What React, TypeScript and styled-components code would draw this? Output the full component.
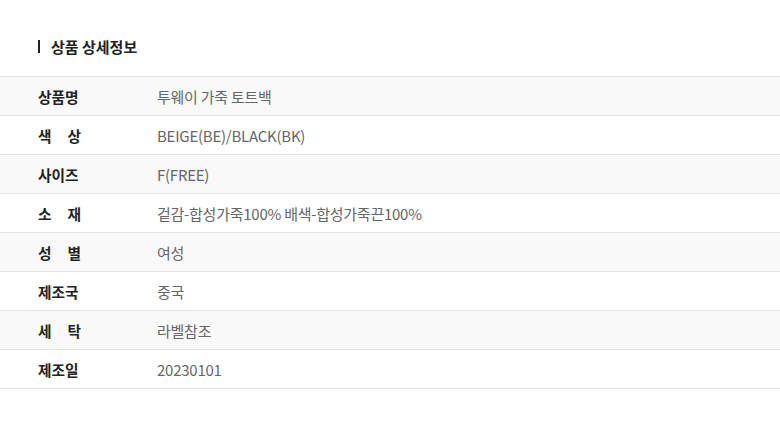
import styled, { createGlobalStyle } from 'styled-components';

const GlobalStyle = createGlobalStyle`
  * { box-sizing: border-box; }
  body {
    margin: 0;
    background: #fff;
    font-family: "Noto Sans CJK KR", "Noto Sans", sans-serif;
  }
`;

const Section = styled.section`
  padding-top: 36px;
`;

const Title = styled.h2`
  display: flex;
  align-items: center;
  gap: 11px;
  margin: 0 0 20px;
  padding-left: 38px;
  height: 20px;
  font-size: 15px;
  font-weight: 700;
  color: #222;

  &::before {
    content: '';
    width: 2px;
    height: 13px;
    background: #222;
  }
`;

const Table = styled.dl`
  margin: 0;
  border-top: 1px solid #e2e2e2;
`;

const Row = styled.div<{ $shaded: boolean }>`
  display: flex;
  align-items: center;
  height: 39px;
  padding-left: 38px;
  border-bottom: 1px solid #e2e2e2;
  background: ${({ $shaded }) => ($shaded ? '#f9f9f9' : '#fff')};
`;

const Label = styled.dt`
  width: 43px;
  margin-right: 76px;
  font-size: 14.7px;
  font-weight: 700;
  color: #222;
  text-align: justify;
  text-align-last: justify;
  white-space: nowrap;
`;

const Value = styled.dd`
  margin: 0;
  font-size: 15px;
  color: #666;
  letter-spacing: -0.25px;
`;

const rows = [
  ['상품명', '투웨이 가죽 토트백'],
  ['색 상', 'BEIGE(BE)/BLACK(BK)'],
  ['사이즈', 'F(FREE)'],
  ['소 재', '겉감-합성가죽100% 배색-합성가죽끈100%'],
  ['성 별', '여성'],
  ['제조국', '중국'],
  ['세 탁', '라벨참조'],
  ['제조일', '20230101'],
];

export default function App() {
  return (
    <>
      <GlobalStyle />
      <Section>
        <Title>상품 상세정보</Title>
        <Table>
          {rows.map(([label, value], i) => (
            <Row key={label} $shaded={i % 2 === 0}>
              <Label>{label}</Label>
              <Value>{value}</Value>
            </Row>
          ))}
        </Table>
      </Section>
    </>
  );
}
